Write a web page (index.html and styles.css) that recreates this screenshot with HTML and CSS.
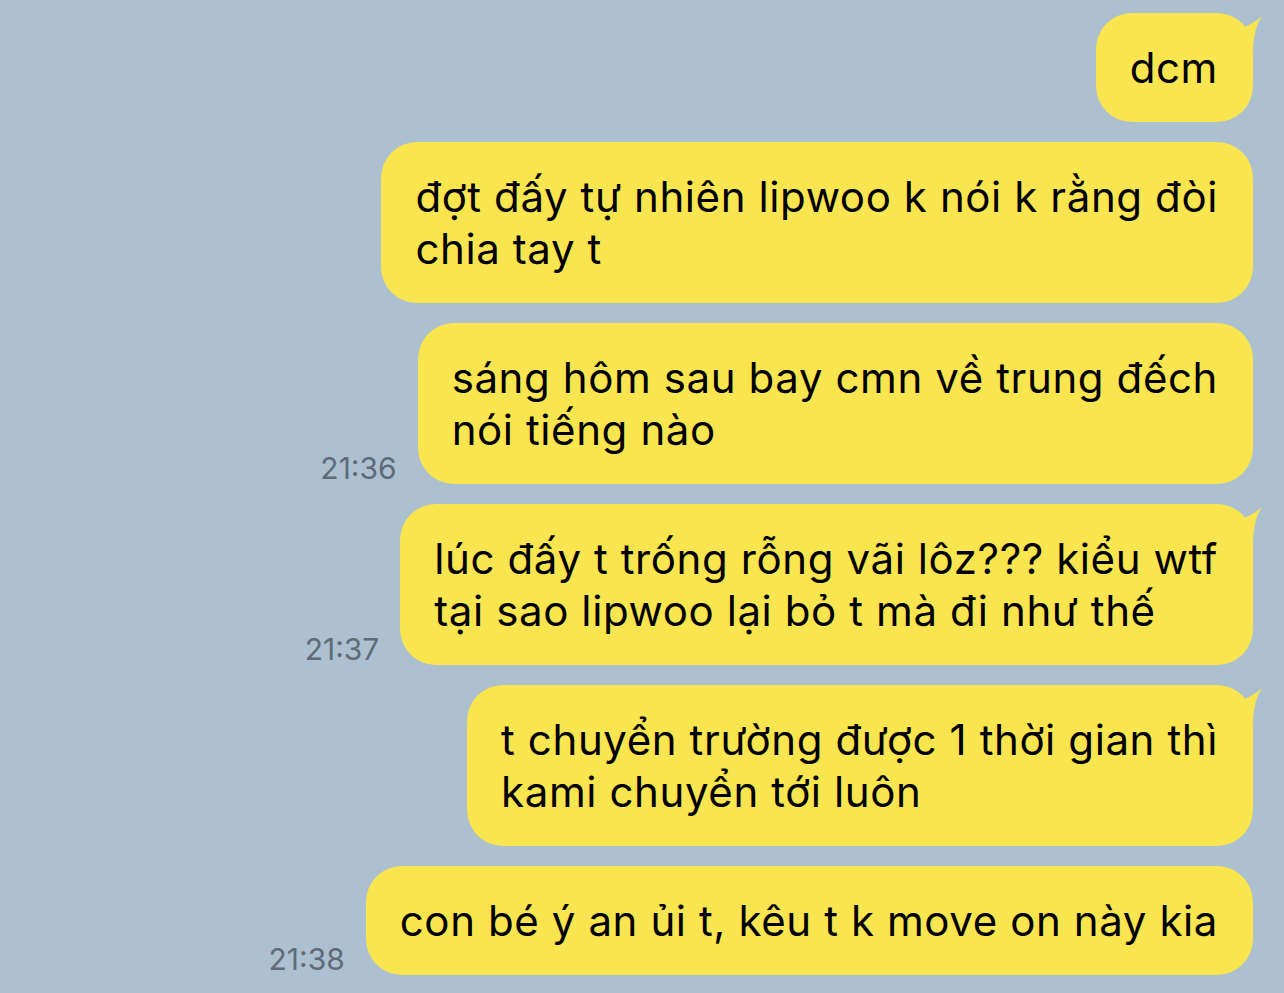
FILE: index.html
```html
<!DOCTYPE html>
<html lang="vi">
<head>
    <meta charset="UTF-8">
    <title>Chat</title>
    <link rel="stylesheet" href="styles.css">
</head>
<body>
    <div class="chat">
        <div class="row">
            <div class="bubble tail">dcm
                <svg class="tail-icon" viewBox="0 0 34 40" width="34" height="40"><path d="M6 16 Q20 14 32 3 Q24 14 23 36 L6 36 Z"/></svg>
            </div>
        </div>
        <div class="row">
            <div class="bubble">đợt đấy tự nhiên lipwoo k nói k rằng đòi<br>chia tay t</div>
        </div>
        <div class="row">
            <span class="time">21:36</span>
            <div class="bubble">sáng hôm sau bay cmn về trung đếch<br>nói tiếng nào</div>
        </div>
        <div class="row">
            <span class="time">21:37</span>
            <div class="bubble tail">lúc đấy t trống rỗng vãi lôz??? kiểu wtf<br>tại sao lipwoo lại bỏ t mà đi như thế
                <svg class="tail-icon" viewBox="0 0 34 40" width="34" height="40"><path d="M6 16 Q20 14 32 3 Q24 14 23 36 L6 36 Z"/></svg>
            </div>
        </div>
        <div class="row">
            <div class="bubble tail">t chuyển trường được 1 thời gian thì<br>kami chuyển tới luôn
                <svg class="tail-icon" viewBox="0 0 34 40" width="34" height="40"><path d="M6 16 Q20 14 32 3 Q24 14 23 36 L6 36 Z"/></svg>
            </div>
        </div>
        <div class="row">
            <span class="time">21:38</span>
            <div class="bubble">con bé ý an ủi t, kêu t k move on này kia</div>
        </div>
    </div>
</body>
</html>
```

FILE: styles.css
```css
body {
    margin: 0;
    background-color: #adc0d0;
    font-family: Inter, "Noto Sans", sans-serif;
    height: 993px;
    overflow: hidden;
}

.chat {
    display: flex;
    flex-direction: column;
    gap: 20px;
    padding: 13px 31px 0 0;
}

.row {
    display: flex;
    justify-content: flex-end;
    align-items: flex-end;
    gap: 21px;
}

.bubble {
    position: relative;
    background-color: #f9e54f;
    color: #000;
    font-size: 42px;
    letter-spacing: 0.6px;
    line-height: 52px;
    padding: 29px 35px 28px 34px;
    border-radius: 36px;
}

.tail-icon {
    position: absolute;
    top: 0;
    right: -11px;
    fill: #f9e54f;
}

.time {
    font-size: 30px;
    color: #5e6b79;
    line-height: 30px;
    padding-bottom: 1px;
}
```
